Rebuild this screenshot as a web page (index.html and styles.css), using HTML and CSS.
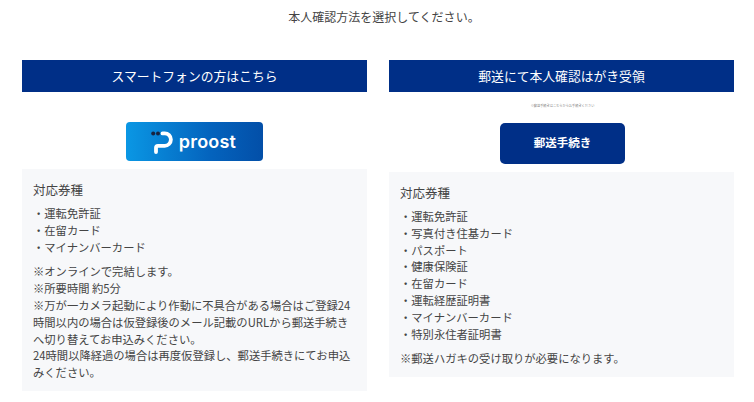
FILE: index.html
```html
<!DOCTYPE html>
<html lang="ja">
<head>
<meta charset="utf-8">
<title>本人確認方法</title>
<link rel="stylesheet" href="styles.css">
</head>
<body>
<main class="page">
  <p class="lead">本人確認方法を選択してください。</p>
  <div class="columns">
    <section class="col">
      <h2 class="col-head">スマートフォンの方はこちら</h2>
      <div class="action action-left">
        <a class="proost" href="#">
          <svg class="proost-mark" viewBox="0 0 24 24" width="24" height="24" aria-hidden="true">
            <circle cx="3.2" cy="3.6" r="2" fill="#17233f"/>
            <circle cx="8" cy="3.6" r="2" fill="#17233f"/>
            <path d="M12.5 3.4h2.2a6.2 6.2 0 0 1 0 12.4H8a2 2 0 0 0-2 2v4.2" fill="none" stroke="#fff" stroke-width="3.8" stroke-linecap="round"/>
          </svg>
          <span class="proost-name">proost</span>
        </a>
      </div>
      <div class="info info-left">
        <h3 class="info-title">対応券種</h3>
        <ul class="doc-list">
          <li>・運転免許証</li>
          <li>・在留カード</li>
          <li>・マイナンバーカード</li>
        </ul>
        <p class="note">※オンラインで完結します。<br>※所要時間 約5分<br>※万が一カメラ起動により作動に不具合がある場合はご登録24時間以内の場合は仮登録後のメール記載のURLから郵送手続きへ切り替えてお申込みください。<br>24時間以降経過の場合は再度仮登録し、郵送手続きにてお申込みください。</p>
      </div>
    </section>
    <section class="col">
      <h2 class="col-head">郵送にて本人確認はがき受領</h2>
      <div class="action action-right">
        <p class="tiny">※郵送手続きはこちらからお手続きください</p>
        <a class="mail-btn" href="#">郵送手続き</a>
      </div>
      <div class="info info-right">
        <h3 class="info-title">対応券種</h3>
        <ul class="doc-list">
          <li>・運転免許証</li>
          <li>・写真付き住基カード</li>
          <li>・パスポート</li>
          <li>・健康保険証</li>
          <li>・在留カード</li>
          <li>・運転経歴証明書</li>
          <li>・マイナンバーカード</li>
          <li>・特別永住者証明書</li>
        </ul>
        <p class="note">※郵送ハガキの受け取りが必要になります。</p>
      </div>
    </section>
  </div>
</main>
</body>
</html>
```

FILE: styles.css
```css
* { box-sizing: border-box; }
html, body { margin: 0; padding: 0; background: #fff; }
body {
  width: 754px;
  height: 402px;
  overflow: hidden;
  font-family: "Noto Sans CJK JP", "Noto Sans", sans-serif;
  color: #444;
}
.page { padding: 8px 20px 0 22px; }
.lead {
  margin: 0;
  padding-left: 12px;
  font-size: 12px;
  line-height: 18px;
  text-align: center;
}
.columns {
  display: flex;
  gap: 22px;
  margin-top: 34px;
  align-items: flex-start;
}
.col { width: 345px; flex: none; }
.col-head {
  margin: 0;
  height: 32px;
  background: #002f87;
  color: #fff;
  font-size: 12.8px;
  font-weight: 400;
  line-height: 32px;
  text-align: center;
}
.action { display: flex; flex-direction: column; align-items: center; }
.action-left { padding: 30px 0 8px; }
.action-right { padding: 11px 0 8px 2px; }
.proost {
  width: 137px;
  height: 39px;
  padding-right: 3px;
  border-radius: 4px;
  background: linear-gradient(90deg, #0a97e4 0%, #0463bd 62%, #034fa8 100%);
  display: flex;
  align-items: center;
  justify-content: center;
  gap: 5px;
  color: #fff;
  text-decoration: none;
}
.proost-mark { flex: none; margin-top: 1px; }
.proost-name {
  font-family: Inter, "Open Sans", sans-serif;
  font-size: 18px;
  font-weight: 600;
  line-height: 24px;
  letter-spacing: 0.2px;
}
.tiny {
  margin: 0 0 15px;
  font-size: 3.2px;
  line-height: 5px;
  color: #888;
}
.mail-btn {
  width: 125px;
  height: 41px;
  border-radius: 5px;
  background: #002f87;
  color: #fff;
  font-size: 11.5px;
  font-weight: 700;
  line-height: 38px;
  text-align: center;
  text-decoration: none;
}
.info { background: #f7f8fa; }
.info-left { padding: 12px 11px 10px; }
.info-right { padding: 12px 11px 10px; }
.info-title {
  margin: 0 0 6px;
  font-size: 12.5px;
  font-weight: 400;
  line-height: 18px;
}
.doc-list {
  margin: 0 0 8px;
  padding: 0;
  list-style: none;
  font-size: 11.3px;
  line-height: 16.8px;
}
.note {
  margin: 0;
  font-size: 11.3px;
  line-height: 16.8px;
}
```
